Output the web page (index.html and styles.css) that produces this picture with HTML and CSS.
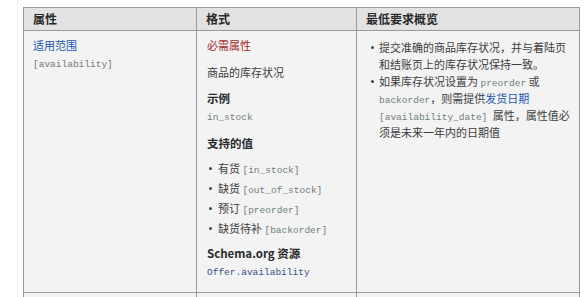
FILE: index.html
```html
<!DOCTYPE html>
<html lang="zh-CN">
<head>
<meta charset="utf-8">
<link rel="stylesheet" href="styles.css">
</head>
<body>
<div class="page">
<table class="spec">
  <colgroup><col class="c1"><col class="c2"><col class="c3"></colgroup>
  <thead>
    <tr><th>属性</th><th>格式</th><th>最低要求概览</th></tr>
  </thead>
  <tbody>
    <tr>
      <td>
        <div class="attr"><a class="link">适用范围</a></div>
        <div><code>[availability]</code></div>
      </td>
      <td>
        <p class="req">必需属性</p>
        <p class="desc">商品的库存状况</p>
        <p class="hd">示例</p>
        <div><code>in_stock</code></div>
        <p class="hd hd2">支持的值</p>
        <ul class="vals">
          <li>有货 <code>[in_stock]</code></li>
          <li>缺货 <code>[out_of_stock]</code></li>
          <li>预订 <code>[preorder]</code></li>
          <li>缺货待补 <code>[backorder]</code></li>
        </ul>
        <p class="hd hd3">Schema.org 资源</p>
        <div><code class="lcode">Offer.availability</code></div>
      </td>
      <td>
        <ul class="reqs">
          <li>提交准确的商品库存状况，并与着陆页和结账页上的库存状况保持一致。</li>
          <li>如果库存状况设置为 <code>preorder</code> 或 <code>backorder</code>，则需提供<a class="link">发货日期</a> <code class="gap">[availability_date]</code> 属性，属性值必须是未来一年内的日期值</li>
        </ul>
      </td>
    </tr>
    <tr class="next"><td></td><td></td><td></td></tr>
  </tbody>
</table>
</div>
</body>
</html>
```
FILE: styles.css
```css
html, body { margin: 0; padding: 0; background: #fff; }
body {
  font-family: "Noto Sans CJK SC", "Noto Sans", sans-serif;
  font-size: 11px;
  line-height: 17px;
  color: #3c3c3c;
  overflow: hidden;
  height: 297px;
}
.page {
  padding: 7px 0 0 5px;
  width: 556px;
  border-left: 1px solid #f2f2f2;
  margin-left: 17px;
}
.spec {
  border-collapse: collapse;
  table-layout: fixed;
  width: 556px;
  background: #f3f3f3;
}
.c1 { width: 173px; }
.c2 { width: 160px; }
.c3 { width: 223px; }
.spec th, .spec td {
  border: 1px solid #9a9a9a;
  vertical-align: top;
  text-align: left;
}
.spec th {
  background: #e2e2e2;
  font-weight: bold;
  font-size: 12px;
  color: #2a2a2a;
  height: 22px;
  padding: 0 9px;
  line-height: 22px;
}
.spec td { padding: 6px 9px 0 9px; height: 255px; }
.spec td:nth-child(2) { padding-left: 10px; }
.spec td:nth-child(3) { padding-left: 5px; padding-right: 4px; }
.spec tr.next td { height: 20px; padding: 0; }
.link { color: #1a55b0; text-decoration: none; }
code {
  font-family: "Liberation Mono", "DejaVu Sans Mono", monospace;
  font-size: 9.5px;
  line-height: 10px;
  color: #6f7f78;
}
code.gap { margin-right: 3px; }
.lcode { color: #3a4f8a; }
p { margin: 0; }
.req { color: #a51d1d; }
.desc { margin-top: 10px; }
.hd { margin-top: 9px; font-weight: bold; font-size: 11.5px; color: #2a2a2a; }
.hd2 { margin-top: 11px; }
.hd3 { margin-top: 8px; }
ul { margin: 0; padding: 0; list-style: none; }
.vals { margin-top: 8px; }
.vals li { position: relative; padding-left: 11px; margin-bottom: 3px; }
.vals li::before, .reqs li::before {
  content: "";
  position: absolute;
  left: 2px;
  top: 7px;
  width: 3px;
  height: 3px;
  border-radius: 50%;
  background: #444;
}
.reqs { margin-top: 2px; }
.reqs li { position: relative; padding-left: 17px; }
.reqs li::before { left: 9px; }
```
